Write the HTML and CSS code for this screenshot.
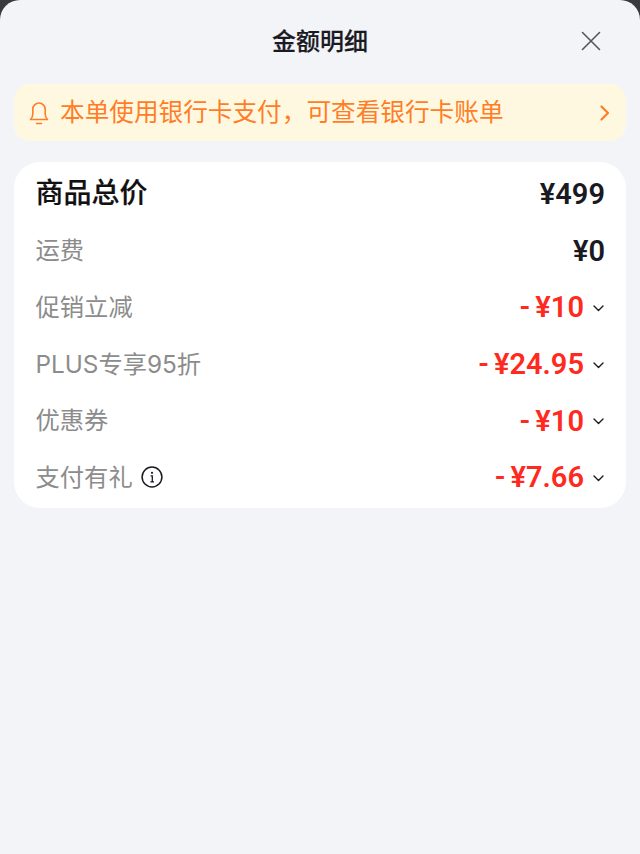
FILE: index.html
```html
<!DOCTYPE html>
<html lang="zh-CN">
<head>
  <meta charset="UTF-8">
  <meta name="viewport" content="width=device-width, initial-scale=1.0">
  <title>金额明细</title>
  <link rel="stylesheet" href="styles.css">
</head>
<body>
  <div class="sheet">
    <div class="header">
      <h1 class="title">金额明细</h1>
      <button class="close" aria-label="关闭">
        <svg width="20" height="20" viewBox="0 0 20 20"><path d="M1.5 1.5 18.5 18.5M18.5 1.5 1.5 18.5" fill="none" stroke="#55565c" stroke-width="1.6" stroke-linecap="round"/></svg>
      </button>
    </div>

    <div class="notice">
      <svg class="bell" width="20" height="24" viewBox="0 0 20 24"><path d="M1.5 18.5H18.5C16.8 17 16.2 15.5 16.2 13V8.2a6.2 6.2 0 0 0-12.4 0V13C3.8 15.5 3.2 17 1.5 18.5ZM7.5 22.5h5" fill="none" stroke="#ff7d26" stroke-width="1.6" stroke-linecap="round" stroke-linejoin="round"/></svg>
      <span class="notice-text">本单使用银行卡支付，可查看银行卡账单</span>
      <svg class="arrow" width="10" height="16" viewBox="0 0 10 16"><path d="M1.5 1.5 8 8 1.5 14.5" fill="none" stroke="#ff7d26" stroke-width="2.2" stroke-linecap="round" stroke-linejoin="round"/></svg>
    </div>

    <div class="card">
      <div class="row total">
        <span class="label">商品总价</span>
        <span class="amount">¥499</span>
      </div>
      <div class="row">
        <span class="label">运费</span>
        <span class="amount">¥0</span>
      </div>
      <div class="row">
        <span class="label">促销立减</span>
        <span class="amount red">- ¥10</span>
        <svg class="chev" width="11" height="7" viewBox="0 0 11 7"><path d="M1 1 5.5 5.5 10 1" fill="none" stroke="#1a1a22" stroke-width="1.4" stroke-linecap="round" stroke-linejoin="round"/></svg>
      </div>
      <div class="row">
        <span class="label">PLUS专享95折</span>
        <span class="amount red">- ¥24.95</span>
        <svg class="chev" width="11" height="7" viewBox="0 0 11 7"><path d="M1 1 5.5 5.5 10 1" fill="none" stroke="#1a1a22" stroke-width="1.4" stroke-linecap="round" stroke-linejoin="round"/></svg>
      </div>
      <div class="row">
        <span class="label">优惠券</span>
        <span class="amount red">- ¥10</span>
        <svg class="chev" width="11" height="7" viewBox="0 0 11 7"><path d="M1 1 5.5 5.5 10 1" fill="none" stroke="#1a1a22" stroke-width="1.4" stroke-linecap="round" stroke-linejoin="round"/></svg>
      </div>
      <div class="row">
        <span class="label">支付有礼</span>
        <svg class="info" width="22" height="22" viewBox="0 0 22 22"><circle cx="11" cy="11" r="9.9" fill="none" stroke="#1a1a22" stroke-width="1.5"/><path d="M9.6 9.8H11.3V15.6M9.4 15.8H13" fill="none" stroke="#1a1a22" stroke-width="1.3"/><circle cx="11" cy="6.8" r="1.1" fill="#1a1a22"/></svg>
        <span class="amount red">- ¥7.66</span>
        <svg class="chev" width="11" height="7" viewBox="0 0 11 7"><path d="M1 1 5.5 5.5 10 1" fill="none" stroke="#1a1a22" stroke-width="1.4" stroke-linecap="round" stroke-linejoin="round"/></svg>
      </div>
    </div>
  </div>
</body>
</html>
```

FILE: styles.css
```css
body {
  margin: 0;
  height: 854px;
  background: #3a3a3c;
  font-family: Inter, "Noto Sans CJK SC", sans-serif;
  overflow: hidden;
}

.sheet {
  height: 854px;
  box-sizing: border-box;
  padding: 0 14px;
  background: #f3f4f8;
  border-radius: 20px 20px 0 0;
}

.header {
  position: relative;
  height: 84px;
  display: flex;
  justify-content: center;
  padding-top: 25px;
  box-sizing: border-box;
}

.title {
  margin: 0;
  font-size: 24px;
  line-height: 34px;
  font-weight: 500;
  color: #1a1a22;
  -webkit-text-stroke: 0.2px #1a1a22;
}

.close {
  position: absolute;
  right: 25px;
  top: 31px;
  padding: 0;
  border: none;
  background: none;
  line-height: 0;
}

.notice {
  display: flex;
  align-items: center;
  height: 57px;
  padding: 0 16px 0 15px;
  background: #fff8e0;
  border-radius: 16px;
  color: #ff7d26;
}

.notice-text {
  flex: 1;
  margin-left: 11px;
  font-size: 24.65px;
  line-height: 57px;
}

.card {
  margin-top: 21px;
  height: 346px;
  box-sizing: border-box;
  padding: 4px 21px 0 21.5px;
  background: #fff;
  border-radius: 26px;
}

.row {
  display: flex;
  align-items: center;
  height: 56.6px;
}

.label {
  margin-bottom: 4px;
  font-size: 24.3px;
  color: #8c8c8c;
}

.amount {
  margin-left: auto;
  font-family: Roboto, "Noto Sans CJK SC", sans-serif;
  font-size: 29px;
  font-weight: 600;
  color: #1a1a22;
}

.red {
  color: #ff2a1f;
  margin-right: 9px;
  word-spacing: -2px;
}

.total .label {
  margin-bottom: 6px;
  font-size: 28px;
  font-weight: 500;
  color: #111;
  -webkit-text-stroke: 0.2px #111;
}

.info {
  margin-left: 8px;
}

.chev {
  margin: 2px 1px 0 0;
}
```
